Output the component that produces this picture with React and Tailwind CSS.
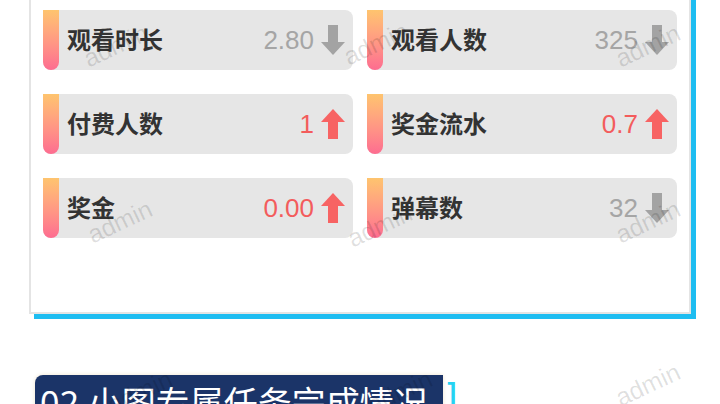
import React from "react";

const stats = [
  { label: "观看时长", value: "2.80", up: false },
  { label: "观看人数", value: "325", up: false },
  { label: "付费人数", value: "1", up: true },
  { label: "奖金流水", value: "0.7", up: true },
  { label: "奖金", value: "0.00", up: true },
  { label: "弹幕数", value: "32", up: false },
];

const marks = [
  [116, 46], [376, 44], [648, 46],
  [120, 222], [380, 226], [648, 222],
  [140, 392], [400, 392], [648, 385],
];

const Arrow = ({ up }) => (
  <svg width="24" height="30" viewBox="0 0 24 30" className="shrink-0">
    {up ? (
      <g fill="#f76363">
        <polygon points="12,0 24,13 0,13" />
        <rect x="7" y="12" width="10" height="18" />
      </g>
    ) : (
      <g fill="#a3a3a3">
        <rect x="7" y="0" width="10" height="18" />
        <polygon points="0,17 24,17 12,30" />
      </g>
    )}
  </svg>
);

const StatCard = ({ label, value, up }) => (
  <div className="relative flex h-[60px] items-center rounded-lg bg-[#e6e6e6] pr-2">
    <div className="h-full w-4 shrink-0 rounded-b-lg bg-gradient-to-b from-[#fec46e] to-[#fd6c90]" />
    <span className="ml-2 text-[24px] font-semibold text-[#333]">{label}</span>
    <span
      className={`ml-auto mr-[7px] text-[26px] font-normal ${
        up ? "text-[#f35c5c]" : "text-[#a5a5a5]"
      }`}
      style={{ fontFamily: '"Liberation Sans", sans-serif' }}
    >
      {value}
    </span>
    <Arrow up={up} />
  </div>
);

export default function App() {
  return (
    <div
      className="relative h-[404px] w-[720px] overflow-hidden bg-white"
      style={{ fontFamily: '"Noto Sans", "Noto Sans CJK SC", sans-serif' }}
    >
      <div className="ml-[29px] mt-[-16px] w-[662px] border-2 border-[#e4e4e4] bg-white px-3 pb-[74px] pt-[24px] shadow-[5px_5px_0_#1ebdf1]">
        <div className="grid grid-cols-2 gap-x-[14px] gap-y-6">
          {stats.map((s) => (
            <StatCard key={s.label} {...s} />
          ))}
        </div>
      </div>

      <div className="ml-[35px] mt-[61px] flex items-start">
        <div className="h-[50px] w-[408px] whitespace-nowrap rounded-tl-lg bg-[#1b3468] pl-[5px] pt-[8px] shadow-[0_0_4px_#efe4cf]">
          <span className="text-[34px] leading-[40px] text-white">
            02 小图专属任务完成情况
          </span>
        </div>
        <span className="ml-[4px] mt-[-2px] text-[30px] font-semibold leading-[40px] text-[#25d2f2]">]</span>
      </div>

      {marks.map(([x, y], i) => (
        <span
          key={i}
          className="pointer-events-none absolute -translate-x-1/2 -translate-y-1/2 -rotate-[25deg] text-[25px] font-light text-black/[0.12]"
          style={{ left: x, top: y, fontFamily: '"Liberation Sans", sans-serif' }}
        >
          admin
        </span>
      ))}
    </div>
  );
}
